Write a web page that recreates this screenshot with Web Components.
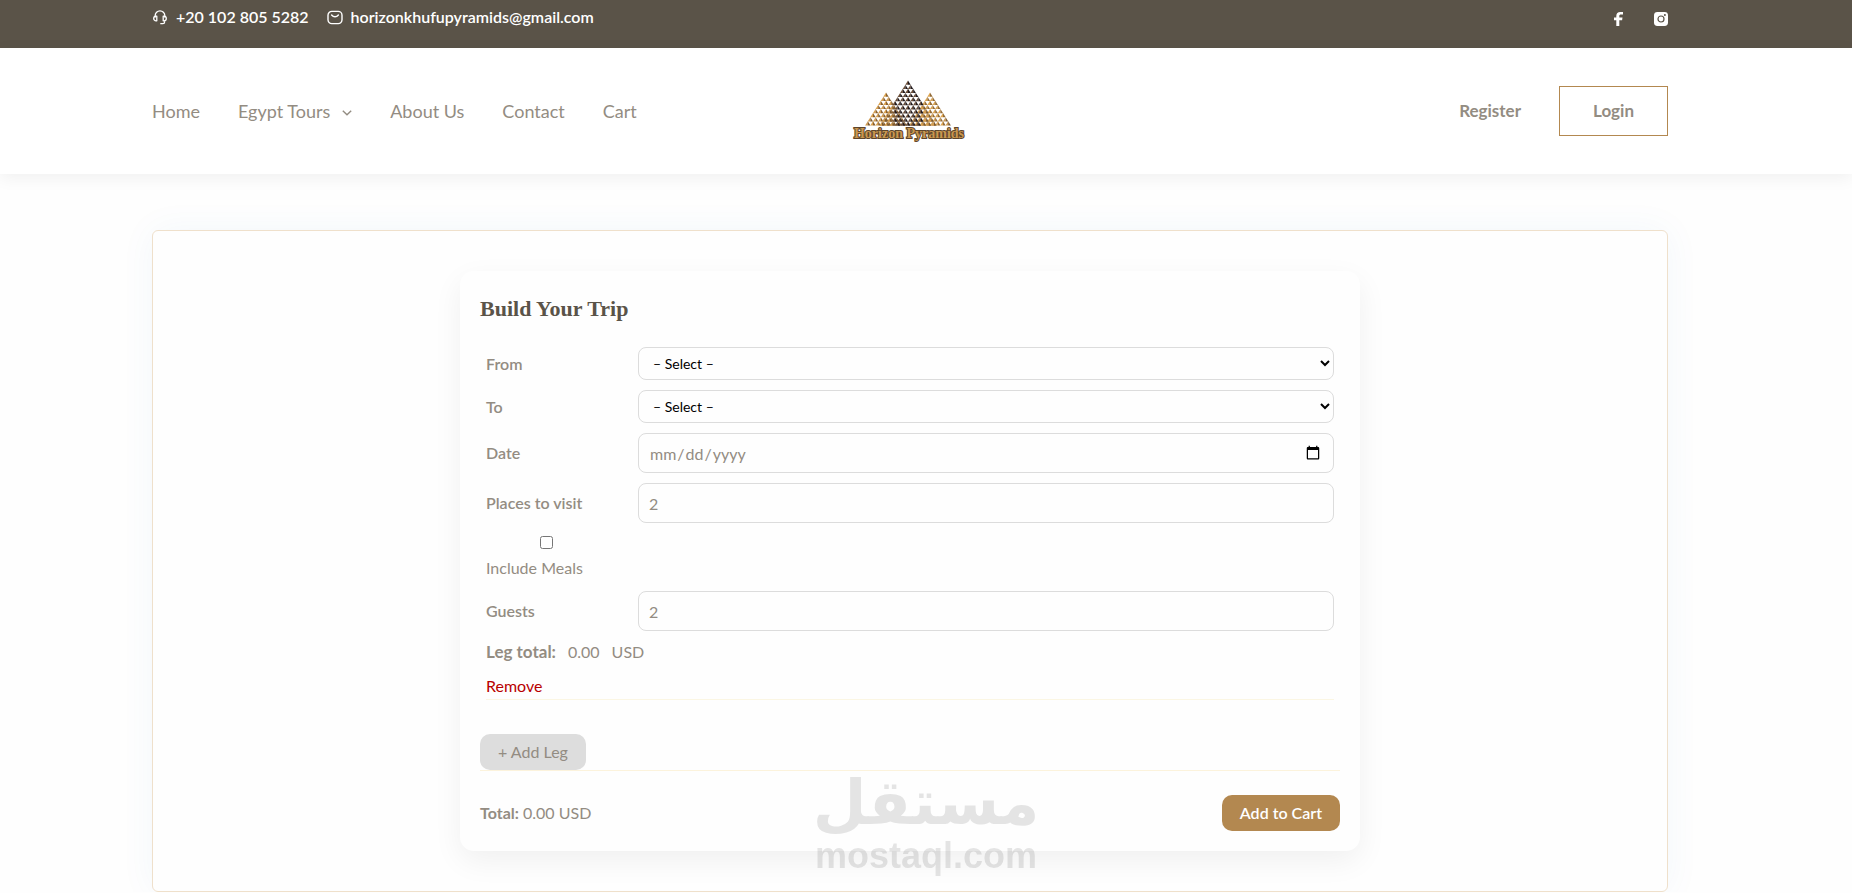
<!DOCTYPE html>
<html lang="en">
<head>
<meta charset="utf-8">
<meta name="viewport" content="width=device-width, initial-scale=1">
<title>Horizon Pyramids</title>
<style>
    :root {
        --brown: #5a5348;
        --gold: #b38850;
        --text: #938c82;
        --line: #dcdcdc;
    }
    body {
        margin: 0;
        background: #fefefe;
        color: var(--text);
        font: 16px/26px Lato, "Open Sans", sans-serif;
    }
</style>
</head>
<body>
<trip-page>
    <top-bar></top-bar>
    <site-header></site-header>
    <trip-builder></trip-builder>
</trip-page>
<site-watermark></site-watermark>

<script>
function define(name, html, setup) {
    const template = document.createElement('template');
    template.innerHTML = html;
    customElements.define(name, class extends HTMLElement {
        constructor() {
            super();
            this.attachShadow({ mode: 'open' }).appendChild(template.content.cloneNode(true));
        }

        connectedCallback() {
            if (setup) setup(this, this.shadowRoot);
        }
    });
}

define('trip-page', `
    <style>
        :host { display: flex; flex-direction: column; --side: 0 184px 0 152px; }
    </style>
    <slot></slot>
`);

define('top-bar', `
    <style>
        :host { display: flex; justify-content: space-between; padding: var(--side); height: 48px; background: var(--brown); }
        .group { display: flex; gap: 18px; height: 34px; align-items: center; }
        .social { gap: 31px; height: 38px; }
        a { display: flex; align-items: center; gap: 8px; color: #fff; font-size: 16px; font-weight: 600; text-decoration: none; }
        svg { display: block; }
    </style>
    <div class="group">
        <a href="tel:+201028055282">
            <svg width="16" height="16" viewBox="0 0 16 16" fill="none" stroke="#fff" stroke-width="1.3" stroke-linecap="round" stroke-linejoin="round">
                <path d="M3.2 8V6.6a4.8 4.8 0 0 1 9.6 0V8"/>
                <path d="M4.8 7.2v4.6H4a2.3 2.3 0 0 1 0-4.6zM11.2 7.2v4.6h.8a2.3 2.3 0 0 0 0-4.6zM12.6 11.8v1.2a1.7 1.7 0 0 1-1.7 1.7H8.8"/>
            </svg>
            <span>+20 102 805 5282</span>
        </a>
        <a href="mailto:horizonkhufupyramids@gmail.com">
            <svg width="16" height="16" viewBox="0 0 16 16" fill="none" stroke="#fff" stroke-width="1.4" stroke-linecap="round">
                <rect x="1" y="2.4" width="14" height="12.2" rx="3.8"/>
                <path d="M4.6 6c2 2.4 4.8 2.4 6.8 0"/>
            </svg>
            <span>horizonkhufupyramids@gmail.com</span>
        </a>
    </div>
    <div class="group social">
        <a href="#" aria-label="Facebook">
            <svg width="9" height="14" viewBox="0 0 9 14" fill="#fff"><path d="M2.3 14V8.2H0V5.6h2.3V4C2.3 1.4 3.8 0 6.2 0H9v2.5H7.1C5.8 2.5 5.3 3 5.3 4v1.6h3.2l-.4 2.6H5.3V14z"/></svg>
        </a>
        <a href="#" aria-label="Instagram">
            <svg width="14" height="14" viewBox="0 0 14 14">
                <rect width="14" height="14" rx="3.4" fill="#fff"/>
                <circle cx="7" cy="7" r="3" fill="none" stroke="#5a5348" stroke-width="1.2"/>
                <circle cx="10.9" cy="3.1" r="1" fill="#5a5348"/>
            </svg>
        </a>
    </div>
`);

define('site-header', `
    <style>
        :host {
            display: grid; grid-template-columns: 1fr auto 1fr; align-items: center;
            padding: var(--side); height: 126px; background: #fff; box-shadow: 0 4px 16px rgba(0, 0, 0, .06);
        }
        nav { display: flex; gap: 38px; font-size: 18px; }
        a { color: inherit; text-decoration: none; white-space: nowrap; }
        .sub { display: flex; align-items: center; gap: 12px; }
        .sub svg { padding-top: 4px; }
        .account { display: flex; justify-content: flex-end; align-items: center; gap: 38px; font-size: 17px; font-weight: 700; }
        .login { padding: 11px 33px; border: 1px solid var(--gold); }
    </style>
    <nav>
        <a href="#">Home</a>
        <a href="#" class="sub">Egypt Tours
            <svg width="10" height="6" viewBox="0 0 10 6" fill="none" stroke="currentColor" stroke-width="1.4"><path d="M.8.8 5 4.8 9.2.8"/></svg>
        </a>
        <a href="#">About Us</a>
        <a href="#">Contact</a>
        <a href="#">Cart</a>
    </nav>
    <a href="#" aria-label="Horizon Pyramids home"><pyramid-logo></pyramid-logo></a>
    <div class="account">
        <a href="#">Register</a>
        <a href="#" class="login">Login</a>
    </div>
`);

define('pyramid-logo', `
    <style>
        :host { display: block; }
        svg { display: block; }
        text { font: bold 14px "Liberation Serif", serif; paint-order: stroke; }
    </style>
    <svg width="116" height="62" viewBox="0 0 116 62">
        <g id="mesh"></g>
        <text x="57" y="58" text-anchor="middle" fill="#c9974f" stroke="#5d452b" stroke-width="2">Horizon Pyramids</text>
    </svg>
`, (host, root) => {
    // each pyramid is a stack of small two-tone triangles
    const step = 5.2;
    const rowHeight = 4.1;
    const pyramid = (cx, top, rows, light, dark) => {
        let out = '';
        for (let r = 0; r < rows; r++) {
            for (let i = 0; i <= r; i++) {
                const x = cx + (i - r / 2) * step;
                const y = top + r * rowHeight;
                const edge = Math.abs(i - r / 2) > 2.5;
                out += `<path fill="${edge ? '#d19a4c' : light}" d="M${x} ${y - .4}l-2.7 4.2h2.7z"/>`;
                out += `<path fill="${edge ? '#7b5930' : dark}" d="M${x} ${y - .4}l2.7 4.2h-2.7z"/>`;
            }
        }
        return out;
    };
    root.getElementById('mesh').innerHTML =
        pyramid(34, 13, 8, '#d9a04c', '#89602f') +
        pyramid(78, 13, 8, '#dda550', '#946b36') +
        pyramid(56, 1, 11, '#6b4e38', '#211a1d');
});

// a label column beside whatever control is slotted in
define('field-row', `
    <style>
        :host { display: grid; grid-template-columns: 140px 1fr; column-gap: 12px; align-items: center; }
    </style>
    <slot name="label"></slot>
    <slot></slot>
`);

define('trip-builder', `
    <style>
        :host { display: block; padding: var(--side); margin-top: 56px; }
        * { box-sizing: border-box; }
        .panel { padding: 40px; border: 1px solid #efe0cb; border-radius: 6px; background: #fefefe; box-shadow: 0 0 36px rgba(45, 120, 190, .05); }
        form { max-width: 900px; margin: 0 auto; padding: 20px; border-radius: 14px; background: #fefefe; box-shadow: 0 10px 30px rgba(0, 0, 0, .06); }
        h2 { margin: 0 0 20px; color: var(--brown); font: bold 22px/36px "Liberation Serif", serif; }
        .leg { display: flex; flex-direction: column; gap: 10px; margin: 0 6px 34px; border-bottom: 1px solid #fbf6e3; }
        label { font-weight: 600; }
        select, input { width: 100%; border: 1px solid var(--line); border-radius: 8px; background: transparent; font-family: inherit; }
        select { height: 33px; padding: 0 10px; color: #000; font-size: 14px; }
        input { height: 40px; padding: 0 10px; color: inherit; font-size: 16px; }
        .meals { display: flex; flex-direction: column; gap: 6px; width: 120px; padding-top: 3px; font-weight: 400; }
        .meals input { align-self: center; width: 13px; height: 13px; margin: 0; }
        .sum { display: flex; gap: 12px; line-height: 22px; }
        .sum strong { font-size: 17px; }
        button { border: 0; font: inherit; cursor: pointer; }
        .remove { align-self: flex-start; padding: 0; background: none; color: #b80000; }
        .add, .cart { display: block; height: 36px; padding: 0 18px; border-radius: 10px; }
        .add { background: #ddd; color: var(--text); }
        .cart { background: var(--gold); color: #fff; font-weight: 600; }
        .total { display: flex; justify-content: space-between; align-items: center; padding-top: 24px; border-top: 1px solid #fcf3dc; }
    </style>
    <div class="panel">
        <form>
            <h2>Build Your Trip</h2>
            <div class="leg">
                <field-row>
                    <label slot="label" for="from">From</label>
                    <select id="from"><option>– Select –</option></select>
                </field-row>
                <field-row>
                    <label slot="label" for="to">To</label>
                    <select id="to"><option>– Select –</option></select>
                </field-row>
                <field-row>
                    <label slot="label" for="date">Date</label>
                    <input id="date" type="date">
                </field-row>
                <field-row>
                    <label slot="label" for="places">Places to visit</label>
                    <input id="places" type="number" min="1" value="2">
                </field-row>
                <label class="meals"><input type="checkbox"><span>Include Meals</span></label>
                <field-row>
                    <label slot="label" for="guests">Guests</label>
                    <input id="guests" type="number" min="1" value="2">
                </field-row>
                <div class="sum"><strong>Leg total:</strong><span>0.00</span><span>USD</span></div>
                <button type="button" class="remove">Remove</button>
            </div>
            <button type="button" class="add">+ Add Leg</button>
            <div class="total">
                <div><strong>Total:</strong> <span>0.00 USD</span></div>
                <button type="button" class="cart">Add to Cart</button>
            </div>
        </form>
    </div>
`);

define('site-watermark', `
    <style>
        :host {
            position: fixed; left: 0; right: 0; bottom: 18px;
            display: flex; flex-direction: column; align-items: center;
            color: #000; opacity: .1; pointer-events: none;
        }
        .arabic { font: bold 62px/68px "DejaVu Sans", sans-serif; }
        .latin { font: bold 36px/38px "Liberation Sans", sans-serif; }
    </style>
    <span class="arabic" lang="ar" dir="rtl">مستقل</span>
    <span class="latin">mostaql.com</span>
`);
</script>
</body>
</html>
